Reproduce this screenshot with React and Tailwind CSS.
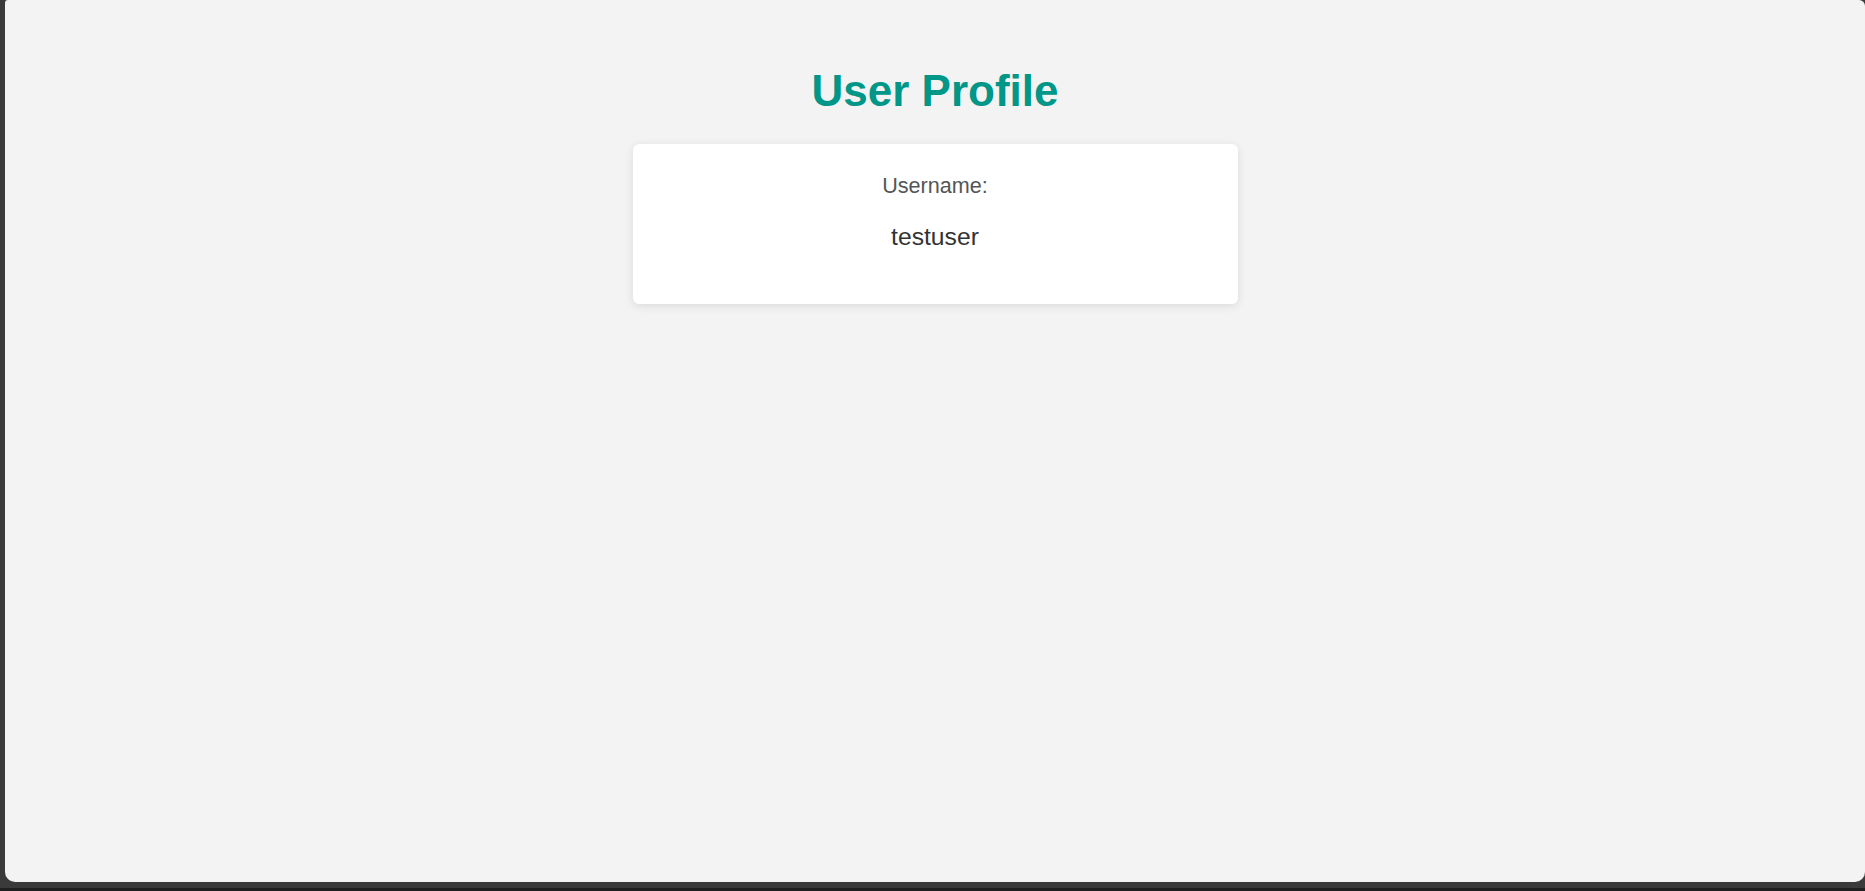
import React from "react";

const UserProfile = () => {
  const user = { username: "testuser" };

  return (
    <div className="flex flex-col items-center pt-[66px] font-['Liberation_Sans',Arial,sans-serif]">
      <h1 className="text-[44px] leading-[49px] font-bold text-[#009688]">User Profile</h1>
      {/* Profile card */}
      <div className="mt-[29px] w-[605px] h-[160px] bg-white rounded-[6px] shadow-[0_2px_10px_rgba(0,0,0,0.1)] flex flex-col items-center pt-[29px]">
        <p className="text-[21.6px] leading-[25px] text-[#555]">Username:</p>
        <p className="mt-[25px] text-[24.7px] leading-[28px] text-[#333]">{user.username}</p>
      </div>
    </div>
  );
};

export default function App() {
  return (
    <div className="h-screen w-full bg-[#3a3a3a] flex flex-col">
      <div className="ml-[5px] h-[882px] bg-[#f3f3f3] rounded-tl-[3px] rounded-tr-[6px] rounded-b-[10px] overflow-hidden">
        <UserProfile />
      </div>
      <div className="mt-auto h-[3px] bg-[#1f1f1f]" />
    </div>
  );
}
